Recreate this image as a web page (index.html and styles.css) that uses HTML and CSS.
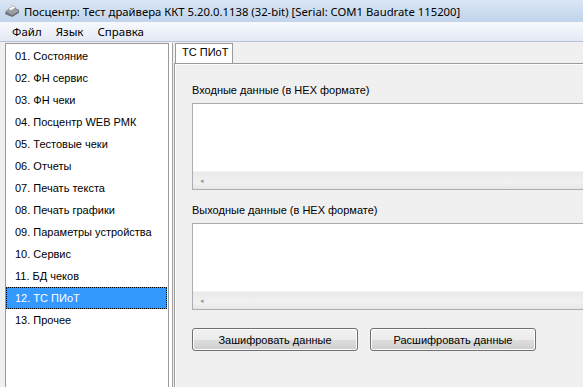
FILE: index.html
```html
<!DOCTYPE html>
<html lang="ru">
<head>
    <meta charset="UTF-8">
    <title>Посцентр: Тест драйвера ККТ</title>
    <link rel="stylesheet" href="styles.css">
</head>
<body>
    <div class="window">
        <div class="titlebar">
            <svg class="app-icon" width="16" height="16" viewBox="0 0 16 16">
                <path d="M2 9 L9 5 L15 8 L15 11 L8 15 L1 12 Z" fill="#6d7177"/>
                <path d="M1 9 L8 13 L15 9 L8 5 Z" fill="#9aa0a6"/>
                <path d="M4 7 L9 4 L12 5.5 L7 8.5 Z" fill="#fff" stroke="#888" stroke-width=".5"/>
                <path d="M5 3 L9 1 L11 2 L7 4 Z" fill="#d8d8d8"/>
            </svg>
            <span>Посцентр: Тест драйвера ККТ 5.20.0.1138 (32-bit) [Serial: COM1 Baudrate 115200]</span>
        </div>
        <div class="menubar">
            <span>Файл</span>
            <span>Язык</span>
            <span>Справка</span>
        </div>
        <div class="client">
            <ul class="pages">
                <li>01. Состояние</li>
                <li>02. ФН сервис</li>
                <li>03. ФН чеки</li>
                <li>04. Посцентр WEB РМК</li>
                <li>05. Тестовые чеки</li>
                <li>06. Отчеты</li>
                <li>07. Печать текста</li>
                <li>08. Печать графики</li>
                <li>09. Параметры устройства</li>
                <li>10. Сервис</li>
                <li>11. БД чеков</li>
                <li class="selected">12. ТС ПИоТ</li>
                <li>13. Прочее</li>
            </ul>
            <div class="tabs">
                <div class="tab-strip">
                    <div class="tab">ТС ПИоТ</div>
                </div>
                <div class="tab-page">
                    <div class="field-label">Входные данные (в HEX формате)</div>
                    <div class="memo">
                        <div class="memo-text"></div>
                        <div class="hscroll"><span class="arrow">&#9666;</span></div>
                    </div>
                    <div class="field-label">Выходные данные (в HEX формате)</div>
                    <div class="memo">
                        <div class="memo-text"></div>
                        <div class="hscroll"><span class="arrow">&#9666;</span></div>
                    </div>
                    <div class="buttons">
                        <button>Зашифровать данные</button>
                        <button>Расшифровать данные</button>
                    </div>
                </div>
            </div>
        </div>
    </div>
</body>
</html>
```

FILE: styles.css
```css
html, body { margin: 0; padding: 0; width: 583px; height: 387px; overflow: hidden; background: #f0f0f0; }
.window { width: 583px; height: 387px; overflow: hidden; display: flex; flex-direction: column; font-family: "Liberation Sans", Arial, sans-serif; font-size: 11px; color: #000; }
.titlebar { height: 22px; display: flex; align-items: center; gap: 4px; padding-left: 4px; background: linear-gradient(#dae6f5, #c0d4ec); font-family: "Noto Sans", sans-serif; font-size: 11.3px; color: #000; white-space: nowrap; flex: none; }
.app-icon { flex: none; margin-top: -2px; }
.menubar { height: 19px; display: flex; align-items: center; gap: 14px; padding-left: 12px; background: linear-gradient(#f7f9fd, #e3e9f4); border-bottom: 1px solid #b9c1d6; font-family: "Noto Sans", sans-serif; font-size: 11.5px; flex: none; }
.client { flex: 1; display: flex; padding: 1px 0 0 5px; gap: 3px; min-height: 0; }
.pages { list-style: none; margin: 0; padding: 1px 0 0; width: 162px; flex: none; background: #fff; border: 1px solid #9a9a9a; border-bottom: none; box-shadow: 3px 0 0 #fff, 4px 0 0 #a0a0a0; }
.pages li { height: 22px; line-height: 22px; padding-left: 9px; white-space: nowrap; }
.pages li.selected { background: #3399ff; color: #fff; outline: 1px dotted #000; outline-offset: -1px; margin-right: 1px; }
.tabs { flex: 1; display: flex; flex-direction: column; margin-left: 2px; min-width: 0; overflow: hidden; }
.tab-strip { height: 20px; display: flex; padding-left: 1px; border-bottom: 1px solid #9b9b9b; flex: none; }
.tab { width: 58px; height: 20px; box-sizing: border-box; padding: 2px 0 0 6px; background: #fff; border: 1px solid #9b9b9b; border-bottom: none; margin-bottom: -1px; }
.tab-page { flex: 1; padding: 18px 0 0 17px; border-left: 1px solid #9b9b9b; box-shadow: inset 1px 1px 0 #fcfcfc; }
.field-label { height: 16px; line-height: 16px; margin-bottom: 5px; white-space: nowrap; }
.memo { height: 87px; box-sizing: border-box; border: 1px solid #abadb3; border-right: none; background: #fff; display: flex; flex-direction: column; margin-bottom: 12px; }
.memo-text { flex: 1; }
.hscroll { height: 17px; background: linear-gradient(#e9e9e9, #f1f1f1 60%, #e6e6e6); display: flex; align-items: center; padding-left: 7px; border-top: 1px solid #f6f6f6; }
.arrow { font-size: 7px; color: #9a9a9a; }
.buttons { display: flex; gap: 12px; margin-top: 18px; }
button { width: 166px; height: 23px; flex: none; border: 1px solid #707070; border-radius: 3px; background: linear-gradient(#f2f2f2 0, #ebebeb 50%, #dddddd 51%, #cfcfcf 100%); font-family: "Liberation Sans", Arial, sans-serif; font-size: 11px; color: #000; padding: 0; box-shadow: inset 0 0 0 1px #fcfcfc; }
```
